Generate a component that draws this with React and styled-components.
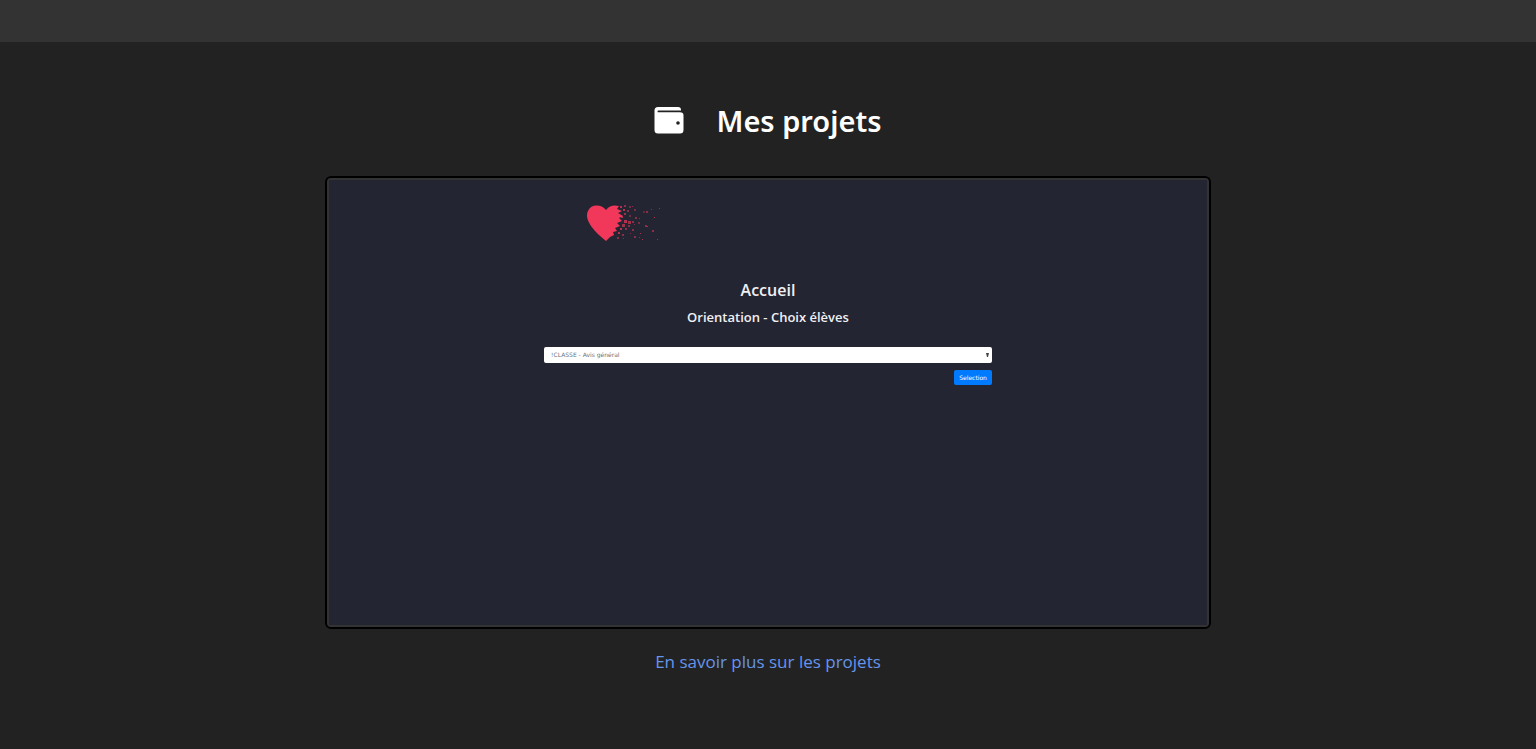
import React from "react";
import styled, { createGlobalStyle } from "styled-components";

const GlobalStyle = createGlobalStyle`
  *, *::before, *::after { box-sizing: border-box; }
  body {
    margin: 0;
    background: #222;
    color: #fff;
    font-family: "Open Sans", "Noto Sans", sans-serif;
  }
`;

const TopBar = styled.header`
  height: 42px;
  background: #333;
`;

const Projects = styled.main`
  display: flex;
  flex-direction: column;
  align-items: center;
  padding: 56px 24px 72px;
`;

const Heading = styled.div`
  display: flex;
  align-items: center;
  gap: 32px;
  margin-bottom: 32px;
`;

const WalletIcon = styled.svg`
  width: 30px;
  height: 30px;
  fill: #fff;
`;

const Title = styled.h1`
  margin: 0;
  font-family: "Noto Sans", sans-serif;
  font-size: 29px;
  font-weight: 600;
  line-height: 46px;
`;

const Frame = styled.section`
  width: 100%;
  max-width: 886px;
  padding: 2px;
  border: 2px solid #000;
  border-radius: 6px;
  background: #333;
`;

const Screen = styled.div`
  display: flex;
  flex-direction: column;
  align-items: center;
  aspect-ratio: 878 / 445;
  padding-top: 24px;
  background: #242532;
`;

const Content = styled.form`
  display: flex;
  flex-direction: column;
  width: 51%;
`;

const HeartLogo = styled.svg`
  width: 76px;
  height: 40px;
  margin-left: 42px;
  fill: #f2385a;
`;

const ScreenTitle = styled.h2`
  margin: 33px 0 0;
  font-size: 16px;
  font-weight: 600;
  line-height: 26px;
  text-align: center;
  color: #f0f0f2;
`;

const ScreenLabel = styled.label`
  margin-top: 4px;
  font-size: 13px;
  font-weight: 600;
  line-height: 20px;
  text-align: center;
  color: #f0f0f2;
`;

const SelectWrap = styled.div`
  display: grid;
  align-items: center;
  margin-top: 20px;
  & > * { grid-area: 1 / 1; }
`;

const Select = styled.select`
  appearance: none;
  width: 100%;
  height: 16px;
  padding: 0 7px;
  border: 0;
  border-radius: 2px;
  background: #fff;
  color: #6c737a;
  font-family: "DejaVu Sans", sans-serif;
  font-size: 6px;
  line-height: 16px;
`;

const Arrow = styled.svg`
  justify-self: end;
  width: 3px;
  height: 4px;
  margin-right: 3px;
  fill: #444;
  pointer-events: none;
`;

const SelectButton = styled.button`
  align-self: flex-end;
  height: 15px;
  margin-top: 7px;
  padding: 0 5px;
  border: 0;
  border-radius: 2px;
  background: #007bff;
  color: #fff;
  font-family: "DejaVu Sans", sans-serif;
  font-size: 6px;
  line-height: 15px;
`;

const MoreLink = styled.a`
  margin-top: 20px;
  font-size: 17px;
  line-height: 26px;
  color: #6495ed;
  text-decoration: none;
`;

const particles = [
  [34, 2, 2, 0.7], [38, 1, 2, 0.5], [43, 2, 2, 0.4], [46, 2, 1, 0.5],
  [37, 5, 2, 0.7], [41, 6, 2, 0.5], [48, 5, 2, 0.4], [57, 7, 2, 0.3],
  [60, 7, 2, 0.5], [65, 5, 1, 0.5], [73, 4, 1, 0.6], [38, 9, 2, 0.6],
  [35, 12, 2, 0.7], [43, 11, 2, 0.4], [49, 13, 2, 0.5], [53, 14, 1, 0.5],
  [68, 13, 1, 0.7], [38, 16, 3, 0.7], [42, 17, 3, 0.6], [46, 17, 2, 0.5],
  [52, 18, 2, 0.4], [36, 20, 3, 0.6], [42, 21, 2, 0.5], [48, 20, 1, 0.5],
  [59, 21, 2, 0.5], [61, 22, 1, 0.7], [34, 24, 2, 0.7], [39, 24, 2, 0.5],
  [46, 25, 2, 0.5], [66, 26, 2, 0.5], [32, 28, 2, 0.7], [36, 30, 2, 0.5],
  [44, 29, 1, 0.5], [54, 29, 1, 0.7], [48, 32, 2, 0.5], [53, 33, 1, 0.5],
  [56, 35, 1, 0.6], [31, 33, 2, 0.5], [37, 34, 1, 0.5], [71, 35, 1, 0.6],
];

export default function App() {
  return (
    <>
      <GlobalStyle />
      <TopBar />
      <Projects>
        <Heading>
          <WalletIcon viewBox="0 0 30 30" aria-hidden="true">
            <path
              fillRule="evenodd"
              d="M4 1H24Q27 1 27 4V4.500H4.500Q3.500 4.500 3.500 5.400Q3.500 6.300 4.500 6.300H26Q29.500 6.300 29.500 9.500V24Q29.500 27.500 26 27.500H4Q0.500 27.500 0.500 24V4.500Q0.500 1 4 1ZM24 15.200a1.800 1.800 0 1 0 0 3.600a1.800 1.800 0 1 0 0-3.600Z"
            />
          </WalletIcon>
          <Title>Mes projets</Title>
        </Heading>
        <Frame>
          <Screen>
            <Content onSubmit={(event) => event.preventDefault()}>
              <HeartLogo viewBox="0 0 76 40" aria-hidden="true">
                <path d="M20 6C24 1 28 1 33 2L31 5L36 7L32 9L37 12L33 14L36 17L31 19L34 22L29 24L31 27L27 28L28 31L24 33L20 37C15 33 9 28 5 22C1 16 0 11 2 7C5 0 15 0 20 6Z" />
                {particles.map(([x, y, size, opacity]) => (
                  <rect key={`${x}-${y}`} x={x} y={y} width={size} height={size} opacity={opacity} />
                ))}
              </HeartLogo>
              <ScreenTitle>Accueil</ScreenTitle>
              <ScreenLabel htmlFor="choice">Orientation - Choix élèves</ScreenLabel>
              <SelectWrap>
                <Select id="choice">
                  <option>!CLASSE - Avis général</option>
                </Select>
                <Arrow viewBox="0 0 3 4" aria-hidden="true">
                  <path d="M0 0H3L2 4H1Z" />
                </Arrow>
              </SelectWrap>
              <SelectButton type="submit">Selection</SelectButton>
            </Content>
          </Screen>
        </Frame>
        <MoreLink href="#projets">En savoir plus sur les projets</MoreLink>
      </Projects>
    </>
  );
}
